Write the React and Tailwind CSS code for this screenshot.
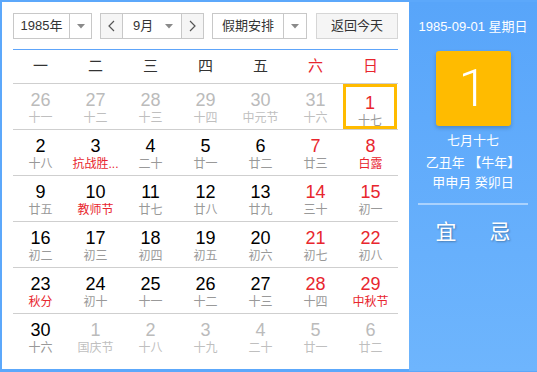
import React from 'react';

const font = "font-['Liberation_Sans','Noto_Sans_CJK_SC',sans-serif]";

// [day, lunar, kind] kind: n normal, w weekend, o other month, t today
const rows = [
  [[26, '十一', 'o'], [27, '十二', 'o'], [28, '十三', 'o'], [29, '十四', 'o'], [30, '中元节', 'o'], [31, '十六', 'o'], [1, '十七', 't']],
  [[2, '十八', 'n'], [3, '抗战胜...', 'n', true], [4, '二十', 'n'], [5, '廿一', 'n'], [6, '廿二', 'n'], [7, '廿三', 'w'], [8, '白露', 'w', true]],
  [[9, '廿五', 'n'], [10, '教师节', 'n', true], [11, '廿七', 'n'], [12, '廿八', 'n'], [13, '廿九', 'n'], [14, '三十', 'w'], [15, '初一', 'w']],
  [[16, '初二', 'n'], [17, '初三', 'n'], [18, '初四', 'n'], [19, '初五', 'n'], [20, '初六', 'n'], [21, '初七', 'w'], [22, '初八', 'w']],
  [[23, '秋分', 'n', true], [24, '初十', 'n'], [25, '十一', 'n'], [26, '十二', 'n'], [27, '十三', 'n'], [28, '十四', 'w'], [29, '中秋节', 'w', true]],
  [[30, '十六', 'n'], [1, '国庆节', 'o'], [2, '十八', 'o'], [3, '十九', 'o'], [4, '二十', 'o'], [5, '廿一', 'o'], [6, '廿二', 'o']],
];

const weekdays = ['一', '二', '三', '四', '五', '六', '日'];

function Caret() {
  return (
    <svg width="8" height="5" viewBox="0 0 8 5">
      <path d="M0 0 L8 0 L4 4.5 Z" fill="#8a8a8a" />
    </svg>
  );
}

function Chevron({ dir }) {
  return (
    <svg width="7" height="12" viewBox="0 0 7 12">
      <path d={dir === 'left' ? 'M6 1 L1 6 L6 11' : 'M1 1 L6 6 L1 11'} fill="none" stroke="#555" strokeWidth="1.2" />
    </svg>
  );
}

function Cell({ day, lunar, kind, festival }) {
  const numColor =
    kind === 'o' ? 'text-[#bbbbbb]' : kind === 'w' || kind === 't' ? 'text-[#e8262e]' : 'text-[#000000]';
  const lunarColor = festival ? 'text-[#e8262e]' : kind === 'o' ? 'text-[#bfbfbf]' : 'text-[#999999]';
  return (
    <div className={`h-[45px] flex flex-col items-center pt-[6px] ${kind === 't' ? 'border-[3px] border-[#ffbb00] pt-[3px] mr-[1px]' : ''}`}>
      <div className={`text-[18px] leading-[20px] ${numColor}`}>{day}</div>
      <div className={`text-[12px] leading-[14px] mt-[1px] whitespace-nowrap ${lunarColor}`}>{lunar}</div>
    </div>
  );
}

export default function App() {
  return (
    <div className={`w-[537px] h-[372px] bg-[#5ca8fb] pl-[2px] pt-[2px] pb-[3px] flex ${font}`}>
      {/* calendar */}
      <div className="w-[407px] h-full bg-white pl-[11px] pr-[11px] pt-[11px]">
        <div className="flex h-[26px] text-[13px] text-[#333]">
          <div className="w-[79px] flex border border-[#c8c8c8]">
            <div className="w-[55px] flex items-center justify-center">1985年</div>
            <div className="flex-1 border-l border-[#c8c8c8] flex items-center justify-center">
              <Caret />
            </div>
          </div>
          <div className="w-[104px] ml-[8px] flex border border-[#c8c8c8]">
            <div className="w-[21px] bg-[#f5f5f5] flex items-center justify-center">
              <Chevron dir="left" />
            </div>
            <div className="w-[60px] border-l border-r border-[#c8c8c8] flex items-center">
              <span className="ml-[10px]">9月</span>
              <span className="ml-auto mr-[8px] flex"><Caret /></span>
            </div>
            <div className="flex-1 bg-[#f5f5f5] flex items-center justify-center">
              <Chevron dir="right" />
            </div>
          </div>
          <div className="w-[95px] ml-[8px] flex border border-[#c8c8c8]">
            <div className="w-[70px] flex items-center justify-center">假期安排</div>
            <div className="flex-1 border-l border-[#c8c8c8] flex items-center justify-center">
              <Caret />
            </div>
          </div>
          <div className="w-[82px] ml-[9px] border border-[#d6d6d6] bg-[#f5f5f5] flex items-center justify-center">
            返回今天
          </div>
        </div>

        <div className="mt-[10px] h-px bg-[#5ea5fa]" />

        <div className="grid grid-cols-7 h-[34px] border-b border-[#cfcfcf] text-[15px]">
          {weekdays.map((w, i) => (
            <div key={w} className={`flex items-center justify-center ${i >= 5 ? 'text-[#e8262e]' : 'text-[#333]'}`}>
              {w}
            </div>
          ))}
        </div>

        {rows.map((r, ri) => (
          <div key={ri} className={`grid grid-cols-7 ${ri < rows.length - 1 ? 'border-b border-[#cfcfcf]' : ''}`}>
            {r.map(([day, lunar, kind, fest], ci) => (
              <Cell key={ci} day={day} lunar={lunar} kind={kind} festival={fest} />
            ))}
          </div>
        ))}
      </div>

      {/* side panel */}
      <div className="flex-1 h-[369px] -mb-[3px] bg-gradient-to-b from-[#58a5fa] to-[#6eb5fd] flex flex-col items-center text-white pt-[17px]">
        <div className="text-[13px] leading-[16px]">1985-09-01 星期日</div>
        <div className="mt-[16px] w-[75px] h-[75px] rounded-[3px] bg-[#ffbb00] shadow-[0_2px_4px_rgba(0,0,0,0.2)] flex items-center justify-center">
          <span className="font-['Roboto',sans-serif] font-light text-[52px] leading-none">1</span>
        </div>
        <div className="mt-[5px] text-[13px] leading-[20px]">七月十七</div>
        <div className="text-[13px] leading-[22px] mt-[1px]">乙丑年 【牛年】</div>
        <div className="text-[13px] leading-[18px]">甲申月 癸卯日</div>
        <div className="mt-[11px] w-[110px] h-[2px] bg-[rgba(255,255,255,0.45)]" />
        <div className="mt-[15px] flex gap-[33px] text-[21px] leading-[24px] [text-shadow:1px_1px_2px_rgba(0,0,0,0.3)]">
          <span>宜</span>
          <span>忌</span>
        </div>
      </div>
    </div>
  );
}
